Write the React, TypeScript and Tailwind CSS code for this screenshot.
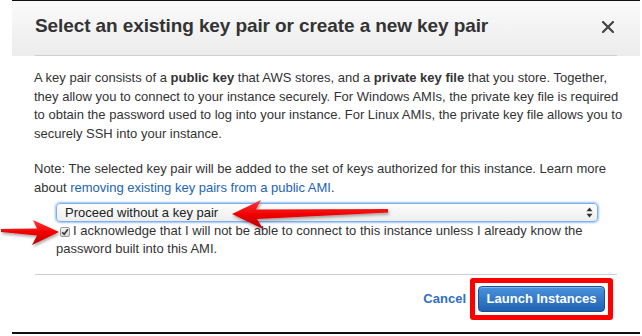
import React from "react";

function RedArrows() {
  return (
    <svg className="absolute left-0 top-0 pointer-events-none" width="642" height="336" viewBox="0 0 642 336">
      <defs>
        <linearGradient id="ra" x1="0" y1="0" x2="0" y2="1">
          <stop offset="0" stopColor="#ff3b3b" />
          <stop offset="0.5" stopColor="#f00000" />
          <stop offset="1" stopColor="#b80000" />
        </linearGradient>
        <filter id="sh" x="-10%" y="-50%" width="120%" height="200%">
          <feDropShadow dx="1" dy="2" stdDeviation="1.5" floodColor="#000" floodOpacity="0.35" />
        </filter>
      </defs>
      {/* arrow pointing left at the select */}
      <path
        d="M232 214 L261 200 L256 209.5 L388 209 L388 212.5 L257 219 L263 229 Z"
        fill="url(#ra)"
        filter="url(#sh)"
      />
      {/* arrow pointing right at the checkbox */}
      <path
        d="M59 232 L33 220 L37 228.5 L1 229 L1 232 L37 235.5 L32 245 Z"
        fill="url(#ra)"
        filter="url(#sh)"
      />
    </svg>
  );
}

export default function App() {
  return (
    <div
      className="relative w-[642px] h-[336px] bg-white pl-[12px] pr-[2px] overflow-hidden text-[#333]"
      style={{ fontFamily: '"Liberation Sans", Arial, Helvetica, sans-serif' }}
    >
      <div className="h-[334px] border-t border-b-2 border-[#111] flex flex-col bg-white">
        {/* header */}
        <div className="h-[55px] px-[23px] bg-gradient-to-b from-[#fafafa] to-[#ececec]">
          <div className="h-full flex items-center justify-between border-b border-[#cfcfcf] pb-[4px]">
            <h1 className="text-[19px] font-bold text-[#333] tracking-[-0.1px]">
              Select an existing key pair or create a new key pair
            </h1>
            <svg width="12" height="12" viewBox="0 0 12 12" className="mr-[3px] mt-[2px]">
              <path d="M1 1 L11 11 M11 1 L1 11" stroke="#444" strokeWidth="2.2" strokeLinecap="round" />
            </svg>
          </div>
        </div>

        {/* body */}
        <div className="pl-[22px] pr-[20px] pt-[13px] text-[13px] leading-[18.5px]">
          <p className="w-[590px]">
            A key pair consists of a <b>public key</b> that AWS stores, and a <b>private key file</b> that you store. Together,
            they allow you to connect to your instance securely. For Windows AMIs, the private key file is required
            to obtain the password used to log into your instance. For Linux AMIs, the private key file allows you to
            securely SSH into your instance.
          </p>
          <p className="mt-[17px] w-[590px]">
            Note: The selected key pair will be added to the set of keys authorized for this instance. Learn more
            about <span className="text-[#1c64b4]">removing existing key pairs from a public AMI</span>.
          </p>

          <div className="ml-[22px] mt-[6px] w-[542px]">
            <div className="h-[19px] rounded-[4px] border border-[#7fb0ee] shadow-[0_0_2px_1px_#9cc4f5] bg-gradient-to-b from-[#fdfdfd] to-[#eeeeee] flex items-center justify-between pl-[8px] pr-[4px]">
              <span className="text-[13px] text-[#222] leading-none">Proceed without a key pair</span>
              <svg width="7" height="11" viewBox="0 0 7 11">
                <path d="M3.5 0.5 L6.5 4.3 L0.5 4.3 Z" fill="#333" />
                <path d="M3.5 10.5 L6.5 6.7 L0.5 6.7 Z" fill="#333" />
              </svg>
            </div>
            <div className="leading-[18px]">
              <span className="inline-flex align-[-1px] ml-[4px] mr-[3px] w-[10px] h-[10px] rounded-[2px] border border-[#9a9a9a] bg-gradient-to-b from-[#f4f4f4] to-[#d8d8d8] items-center justify-center">
                <svg width="8" height="8" viewBox="0 0 8 8">
                  <path d="M1.2 4.2 L3.2 6.3 L6.9 1.2" stroke="#333" strokeWidth="1.6" fill="none" />
                </svg>
              </span>
              I acknowledge that I will not be able to connect to this instance unless I already know the
              password built into this AMI.
            </div>
          </div>
        </div>

        {/* footer */}
        <div className="mt-[16px] mx-[23px] border-t border-[#cfcfcf]"></div>
        <div className="flex justify-end items-center pr-[27px] pt-[3px]">
          <span className="text-[13px] font-bold text-[#2f6fc4] mr-[4px] mt-[-1px]">Cancel</span>
          <div className="border-[5px] border-[#ff0000] rounded-[3px] p-[3px]">
            <div className="w-[127px] h-[26px] rounded-[4px] border border-[#1b4f93] bg-gradient-to-b from-[#4a92dc] to-[#1f62b3] flex items-center justify-center text-white text-[13px] font-bold shadow-[inset_0_1px_0_#7db3ea]">
              Launch Instances
            </div>
          </div>
        </div>
      </div>
      <RedArrows />
    </div>
  );
}
